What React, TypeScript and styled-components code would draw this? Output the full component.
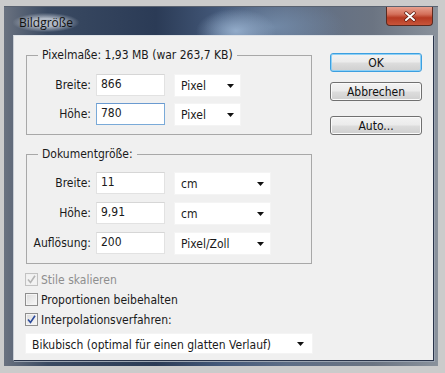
import React from "react";
import styled, { createGlobalStyle } from "styled-components";

const Global = createGlobalStyle`
  html, body { margin: 0; padding: 0; }
  body {
    background: #cbcbcb;
    width: 445px; height: 373px; overflow: hidden;
    font-family: "DejaVu Sans Condensed", "DejaVu Sans", sans-serif;
    font-size: 12px;
    color: #1a1a1a;
  }
`;

const Window = styled.div`
  margin: 6px 0 0 4px;
  width: 434px;
  height: 360px;
  box-sizing: border-box;
  padding: 0 4px 5px 9px;
  display: flex;
  flex-direction: column;
  border-top: 1px solid #5a6270;
  background:
    radial-gradient(ellipse 40px 22px at 232px 24px, rgba(150,175,205,0.95), rgba(150,175,205,0) 100%),
    radial-gradient(ellipse 70px 30px at 270px 20px, rgba(120,145,175,0.8), rgba(120,145,175,0) 100%),
    linear-gradient(90deg, #6a7280 0%, #3a4a62 10%, #2b3b56 35%, #44597a 50%, #5d6d86 65%, #6b7482 85%, #8a929c 100%);
`;

const TitleBar = styled.div`
  height: 28px;
  display: flex;
  align-items: flex-start;
  justify-content: space-between;
`;

const Title = styled.div`
  font-family: "Open Sans", "DejaVu Sans", sans-serif;
  font-size: 12px;
  color: #111;
  margin: 6px 0 0 0;
  padding: 1px 6px;
  border-radius: 8px;
  background: radial-gradient(ellipse at center, rgba(205,212,222,0.8) 30%, rgba(205,212,222,0) 72%);
`;

const CloseButton = styled.div`
  width: 47px;
  height: 19px;
  margin-right: 1px;
  box-sizing: border-box;
  border: 1px solid #5a2a20;
  border-top: none;
  border-radius: 0 0 4px 4px;
  background: linear-gradient(180deg, #e8a08e 0%, #d4705a 40%, #b63a22 60%, #c8553a 100%);
  display: flex;
  align-items: center;
  justify-content: center;
`;

const Client = styled.div`
  flex: 1;
  background: #f0f0f0;
  border: 1px solid #2a344a;
  border-top-color: #dfe3e8;
  border-left-color: #c8cdd4;
  box-shadow: 1px 1px 0 #9aa3b0;
  display: flex;
  padding: 0 0 0 11px;
  box-sizing: border-box;
`;

const MainColumn = styled.div`
  width: 288px;
  display: flex;
  flex-direction: column;
`;

const Group = styled.fieldset<{ $top: number; $pad: number; $gap: number; $bottom: number }>`
  margin: ${(p) => p.$top}px 0 0 1px;
  width: 286px;
  box-sizing: border-box;
  border: 1px solid #a8a8a8;
  padding: ${(p) => p.$pad}px 0 ${(p) => p.$bottom}px 6px;
  display: flex;
  flex-direction: column;
  gap: ${(p) => p.$gap}px;
`;

const Legend = styled.legend`
  margin-left: 5px;
  padding: 0 4px 0 4px;
  line-height: 14px;
`;

const Row = styled.div`
  display: flex;
  align-items: center;
  height: 22px;
`;

const Label = styled.span`
  width: 58px;
  text-align: right;
  white-space: nowrap;
`;

const Input = styled.div<{ $focus?: boolean }>`
  margin-left: 5px;
  width: 69px;
  height: 22px;
  box-sizing: border-box;
  background: #fff;
  border: 1px solid ${(p) => (p.$focus ? "#7aaad8" : "#e2e2e2")};
  border-top-color: ${(p) => (p.$focus ? "#6a9ad0" : "#d6d6d6")};
  padding: 0 0 0 4px;
  line-height: 19px;
`;

const Select = styled.div<{ $w: number; $ml?: number }>`
  margin-left: ${(p) => p.$ml ?? 9}px;
  width: ${(p) => p.$w}px;
  height: 23px;
  box-sizing: border-box;
  background: #fff;
  border: 1px solid #f4f4f4;
  padding: 2px 5px 0 6px;
  display: flex;
  align-items: center;
  justify-content: space-between;
`;

const Arrow = () => (
  <svg width="8" height="5" viewBox="0 0 8 5">
    <path d="M0 0 H7 L3.5 4 Z" fill="#111" />
  </svg>
);

const Checks = styled.div`
  margin-top: 9px;
  display: flex;
  flex-direction: column;
  gap: 7px;
`;

const CheckRow = styled.div<{ $disabled?: boolean }>`
  display: flex;
  align-items: center;
  height: 13px;
  gap: 3px;
  color: ${(p) => (p.$disabled ? "#8e8e8e" : "#1a1a1a")};
`;

const Box = styled.div<{ $disabled?: boolean }>`
  width: 13px;
  height: 13px;
  box-sizing: border-box;
  border: 1px solid ${(p) => (p.$disabled ? "#c2c2c2" : "#8f8f8f")};
  background: ${(p) =>
    p.$disabled ? "#f2f2f2" : "linear-gradient(135deg, #dcdcdc, #f8f8f8)"};
  box-shadow: inset 0 0 0 1px ${(p) => (p.$disabled ? "#f0f0f0" : "#f4f4f4")};
  display: flex;
  align-items: center;
  justify-content: center;
`;

const Check = ({ color }: { color: string }) => (
  <svg width="9" height="9" viewBox="0 0 9 9">
    <path d="M1 4.5 L3.5 7.5 L8 0.8" stroke={color} strokeWidth="1.6" fill="none" />
  </svg>
);

const BigSelect = styled(Select)`
  margin-top: 7px;
  height: 21px;
  padding-right: 7px;
`;

const ButtonColumn = styled.div`
  margin-left: 17px;
  padding-top: 17px;
  display: flex;
  flex-direction: column;
`;

const Button = styled.div<{ $default?: boolean; $gap?: number }>`
  margin-top: ${(p) => p.$gap ?? 0}px;
  width: 92px;
  height: 19px;
  box-sizing: border-box;
  border: 1px solid ${(p) => (p.$default ? "#3c9fe0" : "#707070")};
  box-shadow: ${(p) => (p.$default ? "inset 0 0 0 1px #8ed0f5" : "inset 0 0 0 1px #fafafa")};
  border-radius: 3px;
  background: linear-gradient(180deg, #f3f3f3 0%, #ebebeb 48%, #dddddd 52%, #cfcfcf 100%);
  display: flex;
  align-items: center;
  justify-content: center;
  font-size: 12px;
  color: #111;
`;

export default function App() {
  return (
    <>
      <Global />
      <Window>
        <TitleBar>
          <Title>Bildgröße</Title>
          <CloseButton>
            <svg width="14" height="11" viewBox="0 0 14 11">
              <path d="M3 2 L11 9 M11 2 L3 9" stroke="#5a1a10" strokeWidth="3.4" strokeLinecap="round" />
              <path d="M3 2 L11 9 M11 2 L3 9" stroke="#fff" strokeWidth="2" strokeLinecap="round" />
            </svg>
          </CloseButton>
        </TitleBar>
        <Client>
          <MainColumn>
            <Group $top={12} $pad={12} $gap={7} $bottom={9}>
              <Legend>Pixelmaße: 1,93 MB (war 263,7 KB)</Legend>
              <Row>
                <Label>Breite:</Label>
                <Input>866</Input>
                <Select $w={67}>Pixel<Arrow /></Select>
              </Row>
              <Row>
                <Label>Höhe:</Label>
                <Input $focus>780</Input>
                <Select $w={67}>Pixel<Arrow /></Select>
              </Row>
            </Group>
            <Group $top={12} $pad={11} $gap={8} $bottom={9}>
              <Legend>Dokumentgröße:</Legend>
              <Row>
                <Label>Breite:</Label>
                <Input>11</Input>
                <Select $w={97}>cm<Arrow /></Select>
              </Row>
              <Row>
                <Label>Höhe:</Label>
                <Input>9,91</Input>
                <Select $w={97}>cm<Arrow /></Select>
              </Row>
              <Row>
                <Label>Auflösung:</Label>
                <Input>200</Input>
                <Select $w={97}>Pixel/Zoll<Arrow /></Select>
              </Row>
            </Group>
            <Checks>
              <CheckRow $disabled>
                <Box $disabled><Check color="#b5b5b5" /></Box>
                Stile skalieren
              </CheckRow>
              <CheckRow>
                <Box />
                Proportionen beibehalten
              </CheckRow>
              <CheckRow>
                <Box><Check color="#2b4a9c" /></Box>
                Interpolationsverfahren:
              </CheckRow>
            </Checks>
            <BigSelect $w={288} $ml={0}>
              Bikubisch (optimal für einen glatten Verlauf)
              <Arrow />
            </BigSelect>
          </MainColumn>
          <ButtonColumn>
            <Button $default>OK</Button>
            <Button $gap={10}>Abbrechen</Button>
            <Button $gap={15}>Auto...</Button>
          </ButtonColumn>
        </Client>
      </Window>
    </>
  );
}
